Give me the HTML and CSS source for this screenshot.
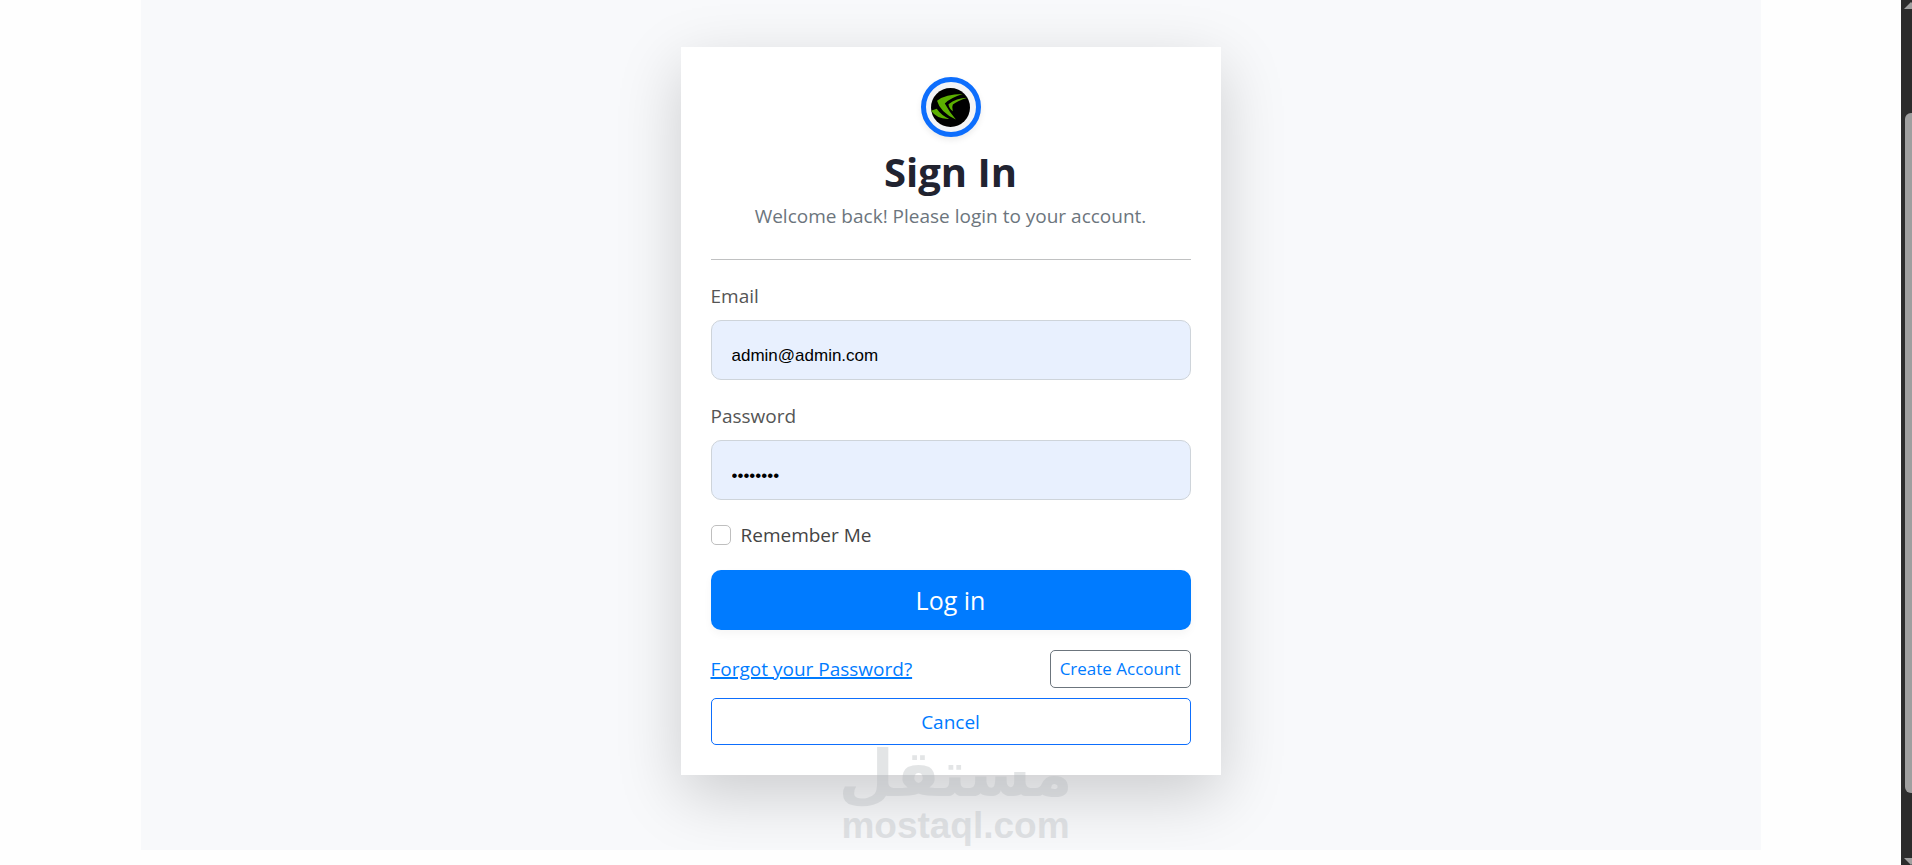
FILE: index.html
```html
<!DOCTYPE html>
<html lang="en">
<head>
    <meta charset="UTF-8">
    <meta name="viewport" content="width=device-width, initial-scale=1.0">
    <title>Sign In</title>
    <link rel="stylesheet" href="styles.css">
</head>
<body>
    <main class="page">
        <div class="login-container">
            <form class="login-card">
                <div class="logo">
                    <svg viewBox="93 68 116 116" width="39" height="39" aria-hidden="true">
                        <circle cx="151" cy="126" r="58" fill="#000"/>
                        <g fill="#5cb000">
                            <path d="M187 86Q136 86 111 106Q120 140 167 162Q147 138 134 114Q150 98 187 86Z"/>
                            <path d="M201 97Q168 98 145 116Q146 128 158 137Q154 124 158 117Q172 106 201 97Z"/>
                            <path d="M93 136L110 130Q124 150 147 160Q112 162 93 136Z"/>
                        </g>
                    </svg>
                </div>
                <h1>Sign In</h1>
                <p class="subtitle">Welcome back! Please login to your account.</p>
                <hr>

                <label class="field-label" for="email">Email</label>
                <input class="field" type="email" id="email" value="admin@admin.com">

                <label class="field-label" for="password">Password</label>
                <input class="field" type="password" id="password" value="password">

                <div class="remember">
                    <input type="checkbox" id="remember">
                    <label for="remember">Remember Me</label>
                </div>

                <button class="btn-login" type="submit">Log in</button>

                <div class="links">
                    <a class="forgot" href="#">Forgot your Password?</a>
                    <a class="btn-outline btn-create" href="#">Create Account</a>
                </div>
                <a class="btn-outline btn-cancel" href="#">Cancel</a>
            </form>

            <div class="watermark">
                <span class="watermark-ar" lang="ar">مستقل</span>
                <span class="watermark-en">mostaql.com</span>
            </div>
        </div>
    </main>

    <div class="scrollbar">
        <span class="arrow arrow-up"></span>
        <span class="thumb"></span>
        <span class="arrow arrow-down"></span>
    </div>
</body>
</html>
```

FILE: styles.css
```css
* {
    box-sizing: border-box;
}

body {
    display: flex;
    min-height: 100vh;
    margin: 0;
    overflow: hidden;
    background: #fefefe;
    color: #212529;
    font-family: "Segoe UI", "Open Sans", "Noto Sans", sans-serif;
    font-size: 19px;
    line-height: 30px;
}

.page {
    flex: 1;
}

.login-container {
    position: relative;
    display: flex;
    justify-content: center;
    max-width: 1620px;
    margin: 0 auto;
    padding: 47px 0 75px;
    overflow: hidden;
    background: #f8f9fb;
}

.login-card {
    width: 540px;
    padding: 30px;
    background: #fff;
    box-shadow: 0 20px 60px rgba(0, 0, 0, 0.18);
}

.logo {
    display: flex;
    align-items: center;
    justify-content: center;
    width: 60px;
    height: 60px;
    margin: 0 auto 10px;
    border: 5px solid #0d6efd;
    border-radius: 50%;
    background: #f3f4f6;
    box-shadow: 0 3px 6px rgba(0, 0, 0, 0.08);
}

h1 {
    margin: 0;
    color: #212330;
    font-size: 40px;
    font-weight: 700;
    line-height: 50px;
    text-align: center;
}

.subtitle {
    margin: 4px 0 28px;
    color: #6c757d;
    text-align: center;
}

hr {
    margin: 0 0 20px;
    border: 0;
    border-top: 1px solid #c0c1c2;
}

.field-label {
    display: block;
    padding-top: 1px;
    margin-bottom: 9px;
    color: #555;
}

.field {
    display: block;
    width: 100%;
    height: 60px;
    margin-bottom: 20px;
    padding: 20px 20px 8px;
    border: 1px solid #ced4da;
    border-radius: 10px;
    background: #e8f0fe;
    color: #000;
    font-family: "Liberation Sans", Arial, sans-serif;
    font-size: 17px;
}

.remember {
    display: flex;
    align-items: center;
    gap: 10px;
    margin-bottom: 20px;
    color: #444;
}

.remember input {
    appearance: none;
    width: 20px;
    height: 20px;
    margin: 0;
    border: 1px solid #bfbfbf;
    border-radius: 5px;
    background: #fff;
}

.btn-login {
    display: block;
    width: 100%;
    height: 60px;
    margin-bottom: 20px;
    border: 0;
    border-radius: 10px;
    background: #007bff;
    box-shadow: 0 4px 8px rgba(0, 0, 0, 0.04);
    color: #fff;
    font-family: inherit;
    font-size: 25px;
}

.links {
    display: flex;
    align-items: center;
    justify-content: space-between;
    margin-bottom: 10px;
}

.forgot {
    color: #007bff;
    text-decoration-thickness: 2px;
}

.btn-outline {
    border: 1px solid #0d6efd;
    border-radius: 5px;
    color: #007bff;
    text-align: center;
    text-decoration: none;
}

.btn-create {
    padding: 3px 9px;
    border-color: #6c757d;
    font-size: 17px;
}

.btn-cancel {
    display: block;
    padding: 8px 8px 7px;
}

/* watermark over the lower edge of the card */
.watermark {
    position: absolute;
    right: 0;
    bottom: 0;
    left: 0;
    display: flex;
    flex-direction: column;
    align-items: center;
    padding: 0 0 2px 10px;
    color: #b4b8bc;
    font-weight: 700;
    opacity: 0.36;
    pointer-events: none;
}

.watermark-ar {
    font-family: "DejaVu Sans", sans-serif;
    font-size: 64px;
    line-height: 60px;
}

.watermark-en {
    font-family: "Liberation Sans", Arial, sans-serif;
    font-size: 37px;
    line-height: 44px;
}

.scrollbar {
    display: flex;
    flex-direction: column;
    width: 11px;
    height: 100vh;
    overflow: hidden;
    background: #2c2c2c;
}

.arrow {
    flex: none;
    width: 14px;
    height: 7px;
    margin: 2px 3px;
    background: #9f9f9f;
}

.arrow-up {
    clip-path: polygon(50% 0, 100% 100%, 0 100%);
}

.arrow-down {
    margin-bottom: 0;
    clip-path: polygon(0 0, 100% 0, 50% 100%);
}

.thumb {
    flex: 1;
    width: 14px;
    margin: 102px 4px 63px;
    border-radius: 6px;
    background: #9f9f9f;
}
```
